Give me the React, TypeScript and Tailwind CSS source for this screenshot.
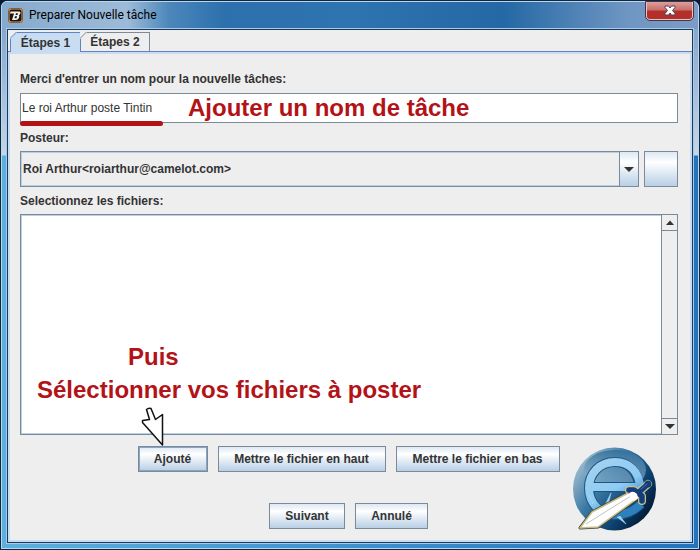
import React, { useState } from 'react';

const buttonLook =
  'h-[26px] border border-[#7a8a99] bg-linear-to-b from-[#dde8f3] via-white via-30% to-[#b8cfe5] text-xs font-bold text-[#333333] whitespace-nowrap';

const AppIcon = () => (
  <svg viewBox="0 0 15 15" className="size-[15px]" aria-hidden="true">
    <rect width="15" height="15" rx="2" fill="#d9a877" />
    <rect x="0.500" y="0.500" width="14" height="14" rx="2" fill="none" stroke="#8d5c33" />
    <rect x="1.500" y="1.500" width="12" height="12" rx="2" fill="#1b1512" />
    <path d="M2.500 3.500h9q1.500.3.8 2.200L11 7.500q.8 1-.2 2.800-.8 1.700-2.800 1.700H4L6 5.500H2z" fill="#f4f1ec" />
    <path d="M8 5.300h2L9.500 7H7.500zM7 8.300h2L8.500 10.200H6.500z" fill="#1b1512" />
  </svg>
);

const CloseIcon = () => (
  <svg viewBox="0 0 12 11" className="w-3 h-[11px]" aria-hidden="true">
    <path
      d="M1 1h3.500L6 3l1.500-2H11v1.500L8.500 5.500 11 8.500V10H7.500L6 8l-1.500 2H1V8.500l2.500-3L1 2.500z"
      fill="#fff"
      stroke="#4c4456"
      strokeWidth="1"
    />
  </svg>
);

const Arrow: React.FC<{ up?: boolean }> = ({ up }) => (
  <svg viewBox="0 0 10 5" className="w-[10px] h-[5px]" aria-hidden="true">
    <path d={up ? 'M1 5l4-4.500L9 5z' : 'M0 0h10L5 5z'} fill="#333333" />
  </svg>
);

const Pointer = () => (
  <svg viewBox="0 0 24 40" className="absolute left-[3px] -top-[40px] w-6 h-10" aria-hidden="true">
    <path d="M5.500 3.500Q7.500 1.500 10 2.500L14.500 13.500 21.500 8.500V39L1.500 16.500V14.500L8.500 13.500z" fill="#fff" stroke="#111" strokeWidth="1.500" strokeLinejoin="round" />
  </svg>
);

const Logo = () => (
  <svg viewBox="5 5 90 90" className="size-[90px]" aria-hidden="true">
    <defs>
      <linearGradient id="ball" x1="0.1" y1="0.15" x2="0.95" y2="0.75">
        <stop offset="0" stopColor="#9dbbd0" />
        <stop offset="0.35" stopColor="#3c7ba6" />
        <stop offset="0.7" stopColor="#0f4676" />
        <stop offset="1" stopColor="#031b36" />
      </linearGradient>
      <linearGradient id="gloss" x1="0" y1="0" x2="0" y2="1">
        <stop offset="0" stopColor="#2f6c96" stopOpacity="0.8" />
        <stop offset="1" stopColor="#b5d3e8" stopOpacity="0.45" />
      </linearGradient>
      <linearGradient id="letter" x1="0" y1="0" x2="0.6" y2="1">
        <stop offset="0" stopColor="#a3d2f0" />
        <stop offset="0.6" stopColor="#8ecbf2" />
        <stop offset="1" stopColor="#2b80bd" />
      </linearGradient>
    </defs>
    <circle cx="50.500" cy="49" r="41.500" fill="url(#ball)" />
    <ellipse cx="51" cy="30" rx="31" ry="20" fill="url(#gloss)" />
    <path d="M27 47H75C74 31 64 22 51 22C36 22 25 33 25 48C25 63 36 75 51 75C62 75 70 71 77 64" fill="none" stroke="#1b5686" strokeWidth="10" />
    <path d="M25 47H76C75 31 65 22 51 22C36 22 25 33 25 48C25 63 36 75 51 75C62 75 70 71 77 64" fill="none" stroke="url(#letter)" strokeWidth="8" />
    <path d="M41 65l6-12-3 12M24 53l5 11-3-8M53 77l9 7-6-8" stroke="#a9d3ef" fill="#a9d3ef" strokeWidth="0.6" />
    <path d="M16 88l12-16 40-21 6 7-40 29z" fill="#fff" stroke="#3b4534" strokeWidth="3" strokeLinejoin="round" />
    <path d="M16 88l12-16 40-21 6 7-40 29z" fill="#fff" stroke="#c7bc8d" strokeWidth="1.500" strokeLinejoin="round" />
    <path d="M22 84L70 54" stroke="#aeb1b7" strokeWidth="0.8" />
    <g fill="none" strokeLinecap="round" strokeLinejoin="round">
      <path d="M65 50L70 50 78 56 78 61M74 53L84 44" stroke="#cabf93" strokeWidth="8" />
      <path d="M65 50L70 50 78 56 78 61M74 53L84 44" stroke="#123f7a" strokeWidth="5.500" />
      <circle cx="84" cy="44" r="1" stroke="#123f7a" strokeWidth="5" />
      <path d="M77 49L83 44" stroke="#3976ad" strokeWidth="1" />
    </g>
    <path d="M67 52q3-1 6 2l1 4-4 3-6-6z" fill="#fff" />
  </svg>
);

// diagonal cut in the top left corner of a tab
const TabCut: React.FC<{ fill: string; stroke: string }> = ({ fill, stroke }) => (
  <svg viewBox="0 0 7 7" className="absolute -top-px -left-px size-[7px]" aria-hidden="true">
    <path d="M0 0h7L0 7z" fill="#eeeeee" />
    <path d="M7 0v7H0z" fill={fill} />
    <path d="M0 6.500L6.500 0" stroke={stroke} />
  </svg>
);

export default function App() {
  const [tab, setTab] = useState(1);
  const [name, setName] = useState('Le roi Arthur poste Tintin');

  return (
    <div className="min-h-screen bg-[#071b30] font-['Liberation_Sans',Arial,sans-serif] text-[#333333]">
      <div className="flex min-h-screen flex-col rounded-t-lg border border-[#10283f] bg-linear-to-r from-[#5cb0dd] to-[#2272bd]">
        <div className="flex flex-1 flex-col rounded-t-md border border-[#b9d7ef] bg-[linear-gradient(to_bottom,#7c9cc6_0px,#c5d6e8_153px,transparent_154px)] px-[5px] pb-[5px]">
          <header className="-mx-[5px] flex h-[27px] shrink-0 items-start justify-between rounded-t-md bg-[linear-gradient(to_right,#86aacd_0%,#9dbbd8_18%,#4c87bb_24%,#2c70ad_32%,#2e74b0_50%,#2468a5_72%,#6f96c2_90%,#7c9cc6_100%)] pr-[5px] pl-[6px]">
            <div className="flex h-[26px] items-center gap-[6px]">
              <AppIcon />
              <h1 className="font-[Roboto,sans-serif] text-xs text-black">Preparer Nouvelle tâche</h1>
            </div>
            <button
              aria-label="Fermer"
              className="flex h-[18px] w-[47px] items-center justify-center rounded-b border border-t-0 border-[#e7c3c5] bg-linear-to-b from-[#dd9f9c] via-[#c9706b] via-45% to-[#b3302a] to-55% outline outline-[#4b3344]"
            >
              <CloseIcon />
            </button>
          </header>

          <main className="flex flex-1 flex-col border border-[#173b5c] bg-[#eeeeee] pt-[2px] outline outline-[#a9cbe8]">
            <div role="tablist" className="flex h-5 border-b border-[#6382bf] pl-[2px]">
              <button
                role="tab"
                aria-selected={tab === 1}
                onClick={() => setTab(1)}
                className="relative h-5 w-[71px] border border-b-0 border-[#6382bf] bg-[#c8ddf2] text-xs font-bold"
              >
                <TabCut fill="#c8ddf2" stroke="#6382bf" />
                Étapes 1
              </button>
              <button
                role="tab"
                aria-selected={tab === 2}
                onClick={() => setTab(2)}
                className="relative h-[19px] w-[69px] border border-b-0 border-l-0 border-[#7a8a99] text-xs font-bold"
              >
                <TabCut fill="#eeeeee" stroke="#7a8a99" />
                Étapes 2
              </button>
            </div>

            <form className="flex flex-1 flex-col border-2 border-[#c8ddf2] pt-[17px] pr-[12px] pl-[10px]" onSubmit={e => e.preventDefault()}>
              <label htmlFor="task" className="h-[22px] text-xs leading-4 font-bold">
                Merci d'entrer un nom pour la nouvelle tâches:
              </label>
              <div className="relative">
                <input
                  id="task"
                  value={name}
                  onChange={e => setName(e.target.value)}
                  className="block h-[30px] w-full border border-[#7a8a99] bg-white px-px text-xs"
                />
                <span className="absolute top-[1px] left-[168px] text-2xl leading-7 font-bold text-[#b31217]">
                  Ajouter un nom de tâche
                </span>
                <span className="absolute -bottom-[3px] left-0 h-[5px] w-[143px] rounded-full bg-[#b31217]" />
              </div>

              <label htmlFor="poster" className="mt-[7px] h-[21px] text-xs leading-4 font-bold">
                Posteur:
              </label>
              <div className="flex gap-[5px]">
                <div className="relative flex-1">
                  <select
                    id="poster"
                    className="block h-9 w-full appearance-none border border-[#7a8a99] bg-[#eeeeee] pl-[2px] text-xs font-bold shadow-[inset_0_0_0_1px_#b8cfe5]"
                  >
                    <option>Roi Arthur&lt;roiarthur@camelot.com&gt;</option>
                  </select>
                  <span className="pointer-events-none absolute inset-y-0 right-0 flex w-5 items-center justify-center border border-[#7a8a99] bg-linear-to-b from-[#dde8f3] via-white via-30% to-[#b8cfe5]">
                    <Arrow />
                  </span>
                </div>
                <button
                  type="button"
                  aria-label="Choisir un posteur"
                  className="h-9 w-[34px] border border-[#7a8a99] bg-linear-to-b from-[#dde8f3] via-white via-30% to-[#b8cfe5]"
                />
              </div>

              <h2 className="mt-[6px] h-[21px] text-xs leading-4 font-bold">Selectionnez les fichiers:</h2>
              <div className="relative flex min-h-[221px] border border-[#7a8a99] bg-white shadow-[inset_0_0_0_1px_#b8cfe5]">
                <div className="flex-1 pt-[125px] pl-4 text-2xl leading-[33px] font-bold text-[#b31217]">
                  <p className="pl-[91px]">Puis</p>
                  <p>Sélectionner vos fichiers à poster</p>
                </div>
                <div className="flex w-4 flex-col justify-between border-l border-[#7a8a99] bg-[#eeeeee]">
                  <button type="button" aria-label="Monter" className="flex h-4 items-center justify-center border-b border-[#7a8a99]">
                    <Arrow up />
                  </button>
                  <button type="button" aria-label="Descendre" className="flex h-4 items-center justify-center border-t border-[#7a8a99]">
                    <Arrow />
                  </button>
                </div>
              </div>

              <div className="flex flex-1">
                <div className="flex flex-1 flex-col items-center gap-[31px] pt-[11px] pl-[108px]">
                  <div className="flex gap-[10px]">
                    <div className="relative">
                      <Pointer />
                      <button type="button" className={`${buttonLook} w-[70px] shadow-[inset_0_0_0_1px_#8aa4c8]`}>
                        Ajouté
                      </button>
                    </div>
                    <button type="button" className={`${buttonLook} w-[168px]`}>Mettre le fichier en haut</button>
                    <button type="button" className={`${buttonLook} w-[164px]`}>Mettre le fichier en bas</button>
                  </div>
                  <div className="flex gap-[10px]">
                    <button type="button" className={`${buttonLook} w-[76px]`}>Suivant</button>
                    <button type="button" className={`${buttonLook} w-[73px]`}>Annulé</button>
                  </div>
                </div>
                <div className="w-[109px] pt-[10px]">
                  <Logo />
                </div>
              </div>
            </form>
          </main>
        </div>
      </div>
    </div>
  );
}
